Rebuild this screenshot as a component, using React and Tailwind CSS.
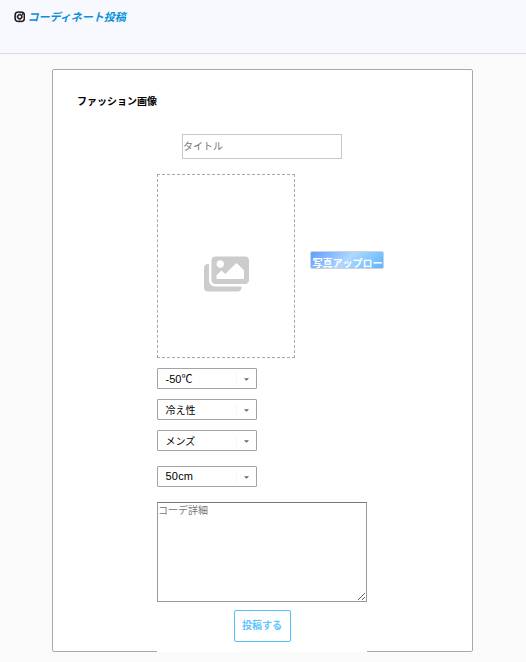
import React from "react";
import { FaImages, FaInstagram } from "react-icons/fa";

function Select({ children, className = "" }) {
  return (
    <button
      type="button"
      className={`flex h-[21px] w-[100px] items-center rounded-[1px] border border-[#a3a3a3] bg-white pl-[7.5px] text-left text-[10px] leading-none text-black ${className}`}
    >
      <span className="flex-1 whitespace-nowrap">{children}</span>
      <span className="flex h-3 w-[20px] items-center border-l border-[#f7f7f7] pt-px pl-[6.5px]">
        <svg width="5" height="3" viewBox="0 0 5 3" fill="#666">
          <path d="M0 .2h5L2.5 2.7z" />
        </svg>
      </span>
    </button>
  );
}

export default function App() {
  return (
    <div className="h-[662px] w-[526px] overflow-hidden bg-[#fafafa] font-['Noto_Sans_CJK_JP',sans-serif] text-black">
      <header className="flex h-[54px] items-start gap-[2.5px] border-b border-[#dcdce0] bg-[#f8f8ff] pt-[10px] pl-[13.5px]">
        <FaInstagram className="mt-[1px] h-[11.5px] w-[11.5px]" stroke="#000" strokeWidth="26" />
        <h1 className="text-[11px] leading-3 font-bold text-[#0a91d8] italic">コーディネート投稿</h1>
      </header>
      <main className="mt-[15px] ml-[52px] h-[583px] w-[421px] rounded-[2px] border border-[#a9a9a9] bg-white">
        <h2 className="pt-[24px] pl-6 text-[10px] leading-[14px] font-bold">ファッション画像</h2>
        <input
          placeholder="タイトル"
          className="mt-[26px] ml-[129px] block h-[25px] w-[160px] border border-[#c8c8c8] bg-white px-0 pb-[2px] text-[10px] placeholder:text-[#757575]"
        />
        <section className="mt-[15px] ml-[104px] w-[210px]">
          <div className="flex w-[240px]">
            <div className="flex h-[184px] w-[138px] shrink-0 items-center justify-center border border-dashed border-[#a9a9a9] pt-[15px]">
              <FaImages className="h-[40px] w-[45px] text-[#ccc]" />
            </div>
            <div className="mt-[77px] ml-[15px] h-[18px] w-[74px] shrink-0 overflow-hidden rounded-[2px] border border-[#ccd3dc] bg-[linear-gradient(135deg,#5f9cff_0%,#afd8ff_50%,#5ab6ff_100%)] pt-[4px] pl-[1.5px] text-[10px] leading-[14px] font-bold whitespace-nowrap text-white">
              写真アップロー
            </div>
          </div>
          <Select className="mt-[10px]">
            <span className="font-['Liberation_Sans','Noto_Sans_CJK_JP',sans-serif] text-[11px]">-50</span>
            <span className="text-[11px]">℃</span>
          </Select>
          <Select className="mt-[10px]">冷え性</Select>
          <Select className="mt-[10px]">メンズ</Select>
          <Select className="mt-[15px]">
            <span className="font-['Liberation_Sans','Noto_Sans_CJK_JP',sans-serif] text-[11px] tracking-[0.2px]">50cm</span>
          </Select>
          <textarea
            placeholder="コーデ詳細"
            className="mt-[15px] block h-[100px] w-[210px] resize border border-[#999] border-t-[#767676] bg-white p-0 text-[10px] leading-[13px] placeholder:text-[#757575]"
          />
          <div className="flex h-[50px] justify-center bg-white pt-2">
            <button type="button" className="h-8 w-[57px] rounded-[2px] border border-[#50c1fa] pb-[2px] text-[10px] leading-[28px] font-bold text-[#60c5fb]">
              投稿する
            </button>
          </div>
        </section>
      </main>
    </div>
  );
}
